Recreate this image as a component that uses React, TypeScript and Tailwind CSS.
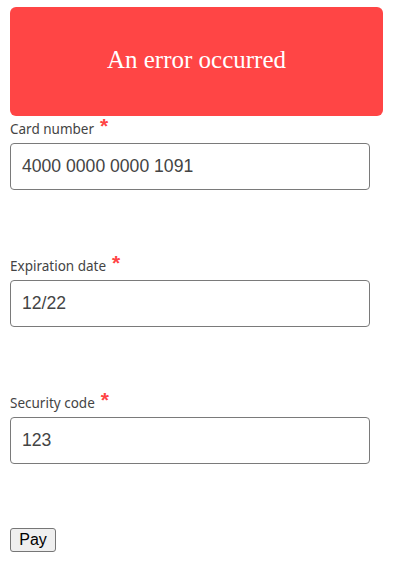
import React from "react";

function Field({ label, value }: { label: string; value: string }) {
  return (
    <div className="mb-[63px]">
      <div className="h-[27px] pt-[3px] leading-[20px] text-[13.5px] text-[#444444] font-['Noto_Sans',sans-serif] whitespace-nowrap">
        {label}
        <span className="relative -top-[4px] ml-[6px] inline-block align-top text-[21px] font-bold leading-[22px] text-[#ff4444] font-['Liberation_Sans',Arial,sans-serif]">
          *
        </span>
      </div>
      <input
        readOnly
        value={value}
        className="block w-[360px] h-[47px] rounded-[4px] border border-[#7a7a7a] bg-white px-[11px] text-[17.6px] text-[#444444] font-['Liberation_Sans',Arial,sans-serif] outline-none"
      />
    </div>
  );
}

export default function App() {
  return (
    <div className="min-h-[562px] bg-white px-[10px] pt-[7px]">
      <div className="flex h-[109px] w-[373px] items-center justify-center rounded-[6px] bg-[#ff4545] pb-[3px]">
        <span className="text-[25px] text-white font-['Liberation_Serif','Times_New_Roman',serif]">
          An error occurred
        </span>
      </div>
      <Field label="Card number" value="4000 0000 0000 1091" />
      <Field label="Expiration date" value="12/22" />
      <Field label="Security code" value="123" />
      <button className="h-[24px] w-[46px] rounded-[3px] border border-[#767676] bg-[#efefef] text-[16px] leading-[20px] text-black font-['Liberation_Sans',Arial,sans-serif]">
        Pay
      </button>
    </div>
  );
}
